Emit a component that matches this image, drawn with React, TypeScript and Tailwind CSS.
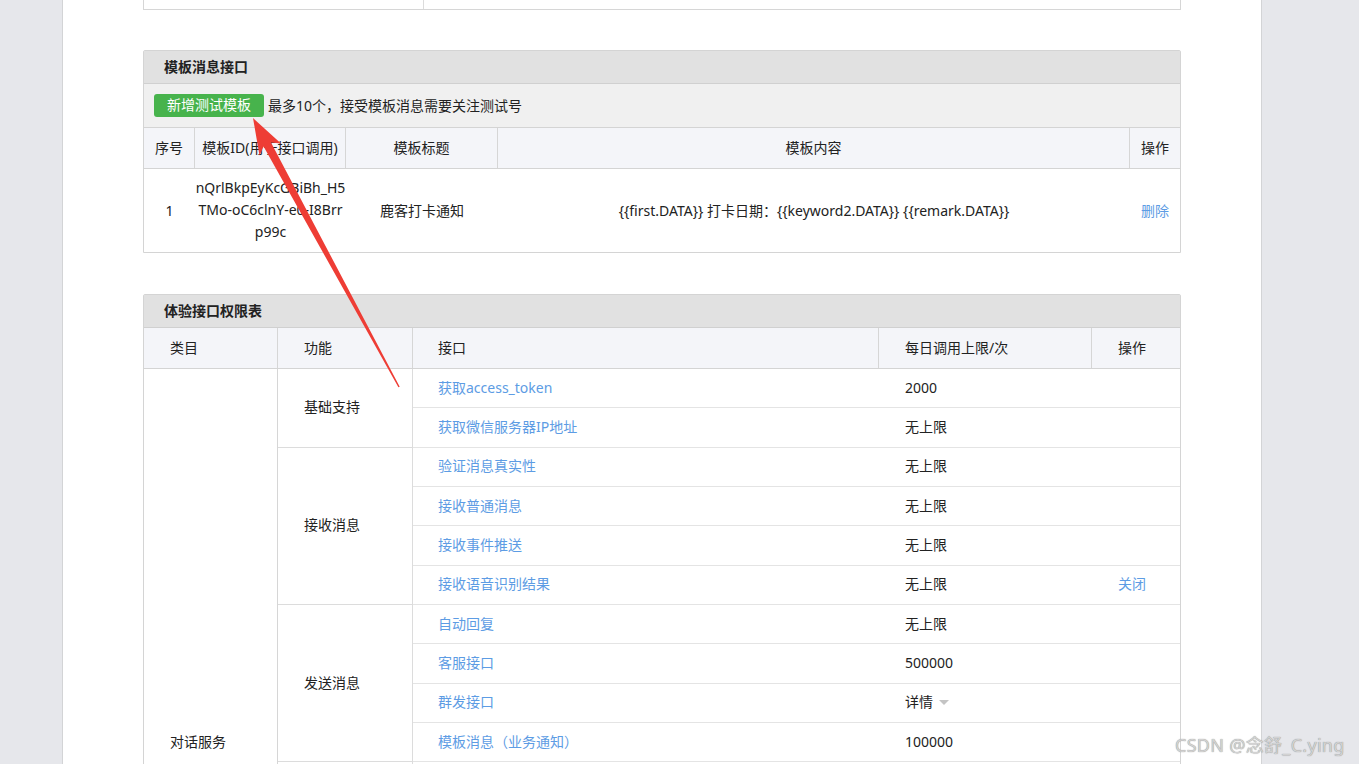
import React from 'react'

type Row = { api: string; limit: string; op?: string }
type Group = { name: string; rows: Row[] }

const groups: Group[] = [
  {
    name: '基础支持',
    rows: [
      { api: '获取access_token', limit: '2000' },
      { api: '获取微信服务器IP地址', limit: '无上限' },
    ],
  },
  {
    name: '接收消息',
    rows: [
      { api: '验证消息真实性', limit: '无上限' },
      { api: '接收普通消息', limit: '无上限' },
      { api: '接收事件推送', limit: '无上限' },
      { api: '接收语音识别结果', limit: '无上限', op: '关闭' },
    ],
  },
  {
    name: '发送消息',
    rows: [
      { api: '自动回复', limit: '无上限' },
      { api: '客服接口', limit: '500000' },
      { api: '群发接口', limit: '详情' },
      { api: '模板消息（业务通知）', limit: '100000' },
    ],
  },
]

// rows of 对话服务 that lie below the fold (用户管理, 推广支持, 界面丰富)
const hiddenRows = 9

function LimitCell({ value }: { value: string }) {
  if (value === '详情') {
    return (
      <span className="inline-flex items-center gap-[6px]">
        详情
        <span className="w-0 h-0 border-l-[5px] border-r-[5px] border-t-[5px] border-l-transparent border-r-transparent border-t-[#c4c4c4] mt-[1px]" />
      </span>
    )
  }
  return <span>{value}</span>
}

function Arrow() {
  return (
    <svg
      className="absolute left-0 top-0 pointer-events-none"
      width="1359"
      height="764"
      viewBox="0 0 1359 764"
    >
      <polygon
        points="253,118 281,143.5 271,142.6 399.7,386.7 398.4,387.3 263.6,146.4 259.5,155.5"
        fill="#ee3d35"
      />
    </svg>
  )
}

export default function App() {
  return (
    <div className="relative h-[764px] overflow-hidden bg-[#e6e7eb] font-['Noto_Sans','Noto_Sans_CJK_SC',sans-serif] text-[14px] text-[#222]">
      <div className="ml-[62px] w-[1200px] h-full bg-white border-l border-r border-[#d3d4d6] px-[80px]">
        {/* tail of the previous table */}
        <div className="h-[10px] border-l border-r border-b border-[#d6d6d6] flex">
          <div className="w-[280px] border-r border-[#dcdcdc]" />
        </div>

        {/* 模板消息接口 */}
        <div className="mt-[40px] border border-[#d4d4d4] rounded-t-[2px]">
          <div className="h-[33px] bg-[#e1e1e1] border-b border-[#d0d0d0] flex items-center pb-[2px] pl-[20px] font-bold">
            模板消息接口
          </div>
          <div className="h-[44px] bg-[#f0f0f0] border-b border-[#d4d4d4] flex items-center pl-[10px] gap-[4px]">
            <button className="h-[23px] w-[110px] rounded-[3px] bg-[#47b34c] text-white text-[14px] leading-none pb-[1px]">
              新增测试模板
            </button>
            <span className="pb-[1px]">最多10个，接受模板消息需要关注测试号</span>
          </div>
          <div className="grid grid-cols-[51px_151px_152px_632px_1fr] h-[41px] bg-[#f4f5f9] border-b border-[#d4d4d4]">
            <div className="border-r border-[#d6d6d6] flex items-center justify-center pb-[2px]">序号</div>
            <div className="border-r border-[#d6d6d6] flex items-center justify-center pb-[2px]">模板ID(用于接口调用)</div>
            <div className="border-r border-[#d6d6d6] flex items-center justify-center pb-[2px]">模板标题</div>
            <div className="border-r border-[#d6d6d6] flex items-center justify-center pb-[2px]">模板内容</div>
            <div className="flex items-center justify-center pb-[2px]">操作</div>
          </div>
          <div className="grid grid-cols-[51px_151px_152px_632px_1fr] h-[83px]">
            <div className="flex items-center justify-center pb-[1px]">1</div>
            <div className="flex items-center justify-center text-center leading-[22px] pb-[1px]">
              nQrlBkpEyKcGBiBh_H5
              <br />
              TMo-oC6clnY-e0-I8Brr
              <br />
              p99c
            </div>
            <div className="flex items-center justify-center pb-[1px]">鹿客打卡通知</div>
            <div className="flex items-center justify-center pb-[1px]">
              {'{{first.DATA}} 打卡日期：{{keyword2.DATA}} {{remark.DATA}}'}
            </div>
            <div className="flex items-center justify-center pb-[1px] text-[#5d9ce4]">删除</div>
          </div>
        </div>

        {/* 体验接口权限表 */}
        <div className="mt-[41px] border border-[#d4d4d4] rounded-t-[2px]">
          <div className="h-[33px] bg-[#e1e1e1] border-b border-[#d0d0d0] flex items-center pb-[2px] pl-[20px] font-bold">
            体验接口权限表
          </div>
          <div className="grid grid-cols-[134px_135px_466px_213px_1fr] h-[41px] bg-[#f4f5f9] border-b border-[#d4d4d4]">
            <div className="border-r border-[#d6d6d6] flex items-center pb-[2px] pl-[26px]">类目</div>
            <div className="border-r border-[#d6d6d6] flex items-center pb-[2px] pl-[26px]">功能</div>
            <div className="border-r border-[#d6d6d6] flex items-center pb-[2px] pl-[25px]">接口</div>
            <div className="border-r border-[#d6d6d6] flex items-center pb-[2px] pl-[26px]">每日调用上限/次</div>
            <div className="flex items-center pb-[2px] pl-[26px]">操作</div>
          </div>
          <div className="flex">
            <div className="w-[134px] shrink-0 border-r border-[#d6d6d6] flex items-center pb-[2px] pl-[26px]">
              对话服务
            </div>
            <div className="flex-1">
              {groups.map((g) => (
                <div key={g.name} className="flex">
                  <div className="w-[135px] shrink-0 border-r border-b border-[#dcdcdc] flex items-center pb-[2px] pl-[26px]">
                    {g.name}
                  </div>
                  <div className="flex-1">
                    {g.rows.map((r) => (
                      <div
                        key={r.api}
                        className="h-[39.33px] border-b border-[#e4e4e4] grid grid-cols-[466px_213px_1fr]"
                      >
                        <div className="flex items-center pb-[2px] pl-[25px] text-[#5d9ce4]">{r.api}</div>
                        <div className="flex items-center pb-[2px] pl-[26px]">
                          <LimitCell value={r.limit} />
                        </div>
                        <div className="flex items-center pb-[2px] pl-[26px] text-[#5d9ce4]">{r.op}</div>
                      </div>
                    ))}
                  </div>
                </div>
              ))}
              <div className="flex" style={{ height: hiddenRows * 39.33 }}>
                <div className="w-[135px] shrink-0 border-r border-[#dcdcdc]" />
                <div className="flex-1" />
              </div>
            </div>
          </div>
        </div>
      </div>

      <Arrow />

      <div className="absolute left-[1175px] top-[732px] text-[18px] text-[#d2d2d2] [text-shadow:0_0_1px_#7a7a7a] font-['Noto_Sans','Noto_Sans_CJK_SC',sans-serif] tracking-[0.3px]">
        CSDN @念舒_C.ying
      </div>
    </div>
  )
}
